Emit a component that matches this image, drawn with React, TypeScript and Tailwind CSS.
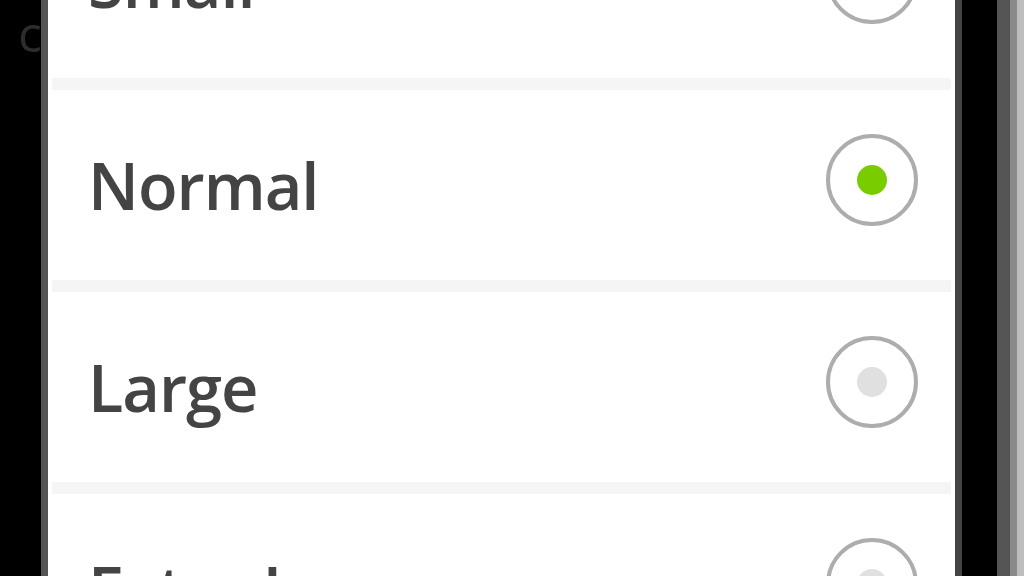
const sizes = [
  { label: 'Small', selected: false },
  { label: 'Normal', selected: true },
  { label: 'Large', selected: false },
  { label: 'Extra Large', selected: false },
]

function Radio({ checked }: { checked: boolean }) {
  return (
    <div className="flex h-[92px] w-[92px] items-center justify-center rounded-full border-[4px] border-[#adadad] bg-white">
      <div className={`h-[30px] w-[30px] rounded-full ${checked ? 'bg-[#78cc00]' : 'bg-[#e0e0e0]'}`} />
    </div>
  )
}

export default function App() {
  return (
    <div className="flex h-[576px] w-[1024px] overflow-hidden bg-black font-['Open_Sans',sans-serif]">
      <div className="relative w-[41px] shrink-0">
        <span className="absolute left-[18px] top-[8px] text-[50px] leading-none text-[#2c2c2c]">c</span>
      </div>
      <div className="w-[7px] shrink-0 bg-[#555]" />
      <div className="flex w-[907px] shrink-0 flex-col bg-white">
        <div className="-mt-[112px] flex flex-col">
          {sizes.map((s, i) => (
            <div key={s.label} className="flex flex-col">
              {i > 0 && <div className="mx-[4px] h-[12px] bg-[#f5f5f5]" />}
              <div className="flex h-[190px] items-center justify-between pl-[40px] pr-[37px] blur-[0.6px]">
                <span className="text-[65px] font-semibold leading-none tracking-[-1px] text-[#444]">{s.label}</span>
                <div className="-mt-[10px]">
                  <Radio checked={s.selected} />
                </div>
              </div>
            </div>
          ))}
        </div>
      </div>
      <div className="w-[7px] shrink-0 bg-[#444]" />
      <div className="w-[35px] shrink-0 bg-black" />
      <div className="w-[13px] shrink-0 bg-[#555]" />
      <div className="w-[7px] shrink-0 bg-[#8a8a8a]" />
      <div className="flex-1 bg-[#bdbdbd]" />
    </div>
  )
}
